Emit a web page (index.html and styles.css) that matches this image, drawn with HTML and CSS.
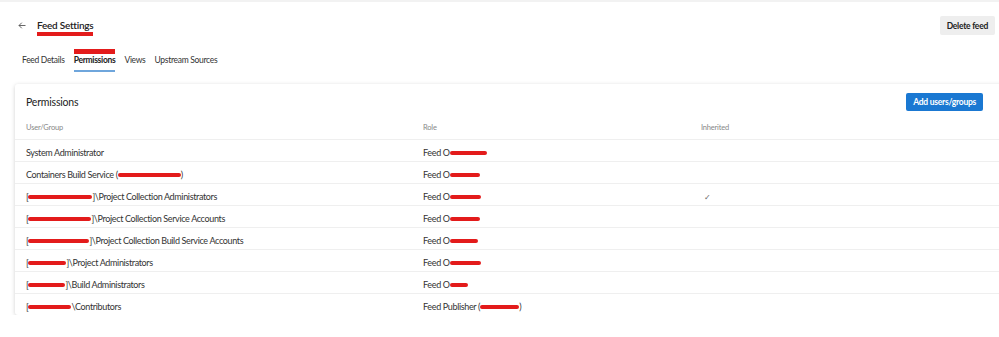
FILE: index.html
```html
<!DOCTYPE html>
<html lang="en">
<head>
  <meta charset="UTF-8" />
  <title>Feed Settings</title>
  <link rel="stylesheet" href="styles.css">
</head>
<body>

  <!-- Header -->
  <div class="header">
    <div class="title-wrap">
      <svg class="back" width="8" height="7" viewBox="0 0 8 7">
        <path d="M7.5 3.5H1M3.8 0.7L1 3.5l2.8 2.8" fill="none" stroke="#555" stroke-width="0.9"/>
      </svg>
      <h1 class="title">Feed Settings</h1>
    </div>
    <button class="btn">Delete feed</button>
  </div>

  <!-- Tabs -->
  <div class="tabs">
    <a href="#">Feed Details</a>
    <a href="#" class="active">Permissions</a>
    <a href="#">Views</a>
    <a href="#">Upstream Sources</a>
  </div>

  <!-- Permissions card -->
  <div class="card">
    <div class="card-head">
      <h2>Permissions</h2>
      <button class="btn primary">Add users/groups</button>
    </div>

    <div class="row head">
      <div class="col-user">User/Group</div>
      <div class="col-role">Role</div>
      <div class="col-inh">Inherited</div>
    </div>

    <div class="row">
      <div class="col-user">System Administrator</div>
      <div class="col-role">Feed O<span class="red" style="width:37px"></span></div>
      <div class="col-inh"></div>
    </div>
    <div class="row">
      <div class="col-user">Containers Build Service (<span class="red" style="width:63px"></span>)</div>
      <div class="col-role">Feed O<span class="red" style="width:30px"></span></div>
      <div class="col-inh"></div>
    </div>
    <div class="row">
      <div class="col-user">[<span class="red" style="width:64px"></span>]\Project Collection Administrators</div>
      <div class="col-role">Feed O<span class="red" style="width:31px"></span></div>
      <div class="col-inh"><span class="check">&#10003;</span></div>
    </div>
    <div class="row">
      <div class="col-user">[<span class="red" style="width:63px"></span>]\Project Collection Service Accounts</div>
      <div class="col-role">Feed O<span class="red" style="width:30px"></span></div>
      <div class="col-inh"></div>
    </div>
    <div class="row">
      <div class="col-user">[<span class="red" style="width:61px"></span>]\Project Collection Build Service Accounts</div>
      <div class="col-role">Feed O<span class="red" style="width:28px"></span></div>
      <div class="col-inh"></div>
    </div>
    <div class="row">
      <div class="col-user">[<span class="red" style="width:38px"></span>]\Project Administrators</div>
      <div class="col-role">Feed O<span class="red" style="width:31px"></span></div>
      <div class="col-inh"></div>
    </div>
    <div class="row">
      <div class="col-user">[<span class="red" style="width:37px"></span>]\Build Administrators</div>
      <div class="col-role">Feed O<span class="red" style="width:18px"></span></div>
      <div class="col-inh"></div>
    </div>
    <div class="row">
      <div class="col-user">[<span class="red" style="width:43px"></span>\Contributors</div>
      <div class="col-role">Feed Publisher (<span class="red" style="width:39px"></span>)</div>
      <div class="col-inh"></div>
    </div>
  </div>

</body>
</html>
```

FILE: styles.css
```css
html, body {
  margin: 0;
  padding: 0;
  overflow: hidden;
  font-family: Lato, 'Noto Sans', sans-serif;
  color: #333;
  background: #fff;
}

body {
  border-top: 2px solid #f2f2f2;
}

.header {
  display: flex;
  justify-content: space-between;
  align-items: center;
  padding: 13px 4px 0 18px;
}

.title-wrap {
  display: flex;
  align-items: center;
  gap: 11px;
  padding-top: 4px;
}

.back {
  margin-top: -4px;
}

.title {
  margin: 0;
  font-size: 10px;
  font-weight: 600;
  letter-spacing: -0.25px;
  color: #222;
  border-bottom: 4px solid #e31b1b;
  line-height: 12px;
  padding-bottom: 1px;
}

.btn {
  font-family: inherit;
  font-size: 8.5px;
  font-weight: 700;
  letter-spacing: -0.25px;
  color: #222;
  background: #eeeeee;
  border: none;
  border-radius: 2px;
  padding: 4px 7px;
  height: 19px;
  cursor: pointer;
}

.btn.primary {
  background: #1a78d2;
  color: #fff;
  height: 18px;
  padding: 3px 7px;
}

.tabs {
  display: flex;
  gap: 9px;
  padding: 13px 0 0 22px;
}

.tabs a {
  font-size: 8.5px;
  letter-spacing: -0.3px;
  color: #333;
  text-decoration: none;
  padding: 1px 0 6px;
  border-top: 5px solid transparent;
}

.tabs a.active {
  border-top-color: #e31b1b;
  border-bottom: 2px solid #6fa6dc;
  padding-bottom: 5px;
  font-weight: 700;
  color: #222;
}

.card {
  margin: 12px -20px 0 15px;
  background: #fff;
  border-radius: 3px;
  box-shadow: 0 1px 4px rgba(0, 0, 0, 0.18);
  padding-top: 9px;
}

.card-head {
  display: flex;
  justify-content: space-between;
  align-items: center;
  padding: 0 36px 4px 11px;
}

.card-head h2 {
  margin: 0;
  font-size: 10.5px;
  font-weight: 400;
  letter-spacing: -0.2px;
  color: #222;
}

.row {
  display: flex;
  align-items: center;
  height: 18px;
  padding-top: 3px;
  font-size: 9px;
  letter-spacing: -0.35px;
  color: #333;
  border-top: 1px solid #efefef;
}

.row.head {
  border-top: none;
  height: 24px;
  padding-top: 0;
  font-size: 7.5px;
  letter-spacing: -0.2px;
  color: #888;
}

.col-user {
  width: 397px;
  padding-left: 11px;
  white-space: nowrap;
}

.col-role {
  width: 278px;
  white-space: nowrap;
}

.col-inh {
  flex: 1;
}

.check {
  color: #666;
  font-size: 8px;
  padding-left: 3px;
}

.red {
  display: inline-block;
  height: 4px;
  background: #e31b1b;
  border-radius: 2px;
  vertical-align: 1px;
}
```
